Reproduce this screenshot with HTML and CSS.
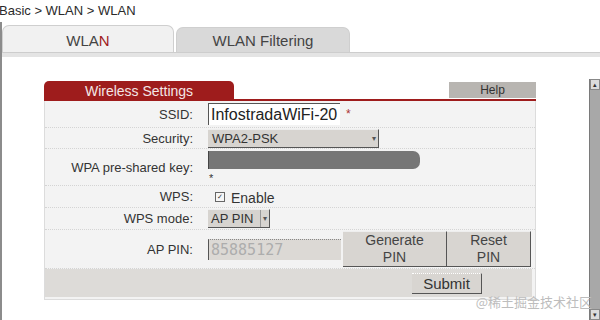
FILE: index.html
```html
<!DOCTYPE html>
<html lang="en">
<head>
  <meta charset="UTF-8">
  <title>WLAN</title>
  <link rel="stylesheet" href="styles.css">
</head>
<body>
  <div class="crumb">Basic &gt; WLAN &gt; WLAN</div>

  <div class="frame">
    <div class="tabs">
      <div class="tab active">WLA<span class="red">N</span></div>
      <div class="tab">WLAN Filtering</div>
    </div>
    <div class="tabline"></div>

    <div class="content">
      <div class="main">
        <div class="panel">
          <div class="panel-head">
            <div class="title">Wireless Settings</div>
            <div class="help">Help</div>
          </div>
          <div class="panel-body">
            <div class="row r-ssid">
              <label>SSID:</label>
              <div class="val">
                <span class="text-input">InfostradaWiFi-20</span>
                <span class="req">*</span>
              </div>
            </div>
            <div class="row r-sec">
              <label>Security:</label>
              <div class="val">
                <span class="select wide">WPA2-PSK<span class="arrow">&#9662;</span></span>
              </div>
            </div>
            <div class="row r-key">
              <label>WPA pre-shared key:</label>
              <div class="val col">
                <span class="masked"></span>
                <span class="star">*</span>
              </div>
            </div>
            <div class="row r-wps">
              <label>WPS:</label>
              <div class="val">
                <span class="check">&#10003;</span>
                <span class="enable">Enable</span>
              </div>
            </div>
            <div class="row r-mode">
              <label>WPS mode:</label>
              <div class="val">
                <span class="select narrow">AP PIN<span class="arrow">&#9662;</span></span>
              </div>
            </div>
            <div class="row r-pin">
              <label>AP PIN:</label>
              <div class="val stretch">
                <span class="pin-input">85885127</span>
                <button class="btn gen">Generate<br>PIN</button>
                <button class="btn reset">Reset<br>PIN</button>
              </div>
            </div>
            <div class="submit-row">
              <button class="submit">Submit</button>
            </div>
          </div>
        </div>
      </div>
      <div class="scrollbar">
        <span class="sb-btn">&#9652;</span>
        <span class="sb-btn">&#9662;</span>
      </div>
    </div>
  </div>

  <div class="watermark">@稀土掘金技术社区</div>
</body>
</html>
```

FILE: styles.css
```css
body {
  margin: 0;
  width: 600px;
  height: 320px;
  overflow: hidden;
  background: #fff;
  font-family: "Liberation Sans", Arial, sans-serif;
  color: #333;
  position: relative;
}
.crumb {
  height: 22px;
  padding-top: 3px;
  box-sizing: border-box;
  margin-left: -1px;
  font-size: 13px;
  line-height: 16px;
  color: #2a2a2a;
}
.frame {
  height: 298px;
  border-left: 2px solid #8c8c8c;
  border-bottom: 2px solid #8c8c8c;
}
.tabs {
  display: flex;
  align-items: flex-end;
  gap: 2px;
  height: 30px;
}
.tab {
  width: 174px;
  height: 25px;
  box-sizing: border-box;
  border: 1px solid #cfcfcf;
  border-bottom: none;
  border-radius: 7px 7px 0 0;
  background: #d9d9d9;
  font-size: 15px;
  line-height: 26px;
  text-align: center;
  color: #444;
}
.tab.active {
  width: 172px;
  height: 27px;
  line-height: 29px;
  background: #f1f1f1;
}
.red {
  color: #a01c1c;
}
.tabline {
  height: 4px;
  background: #e4e4e4;
  border-top: 1px solid #cdcdcd;
}
.content {
  display: flex;
  height: 263px;
}
.main {
  flex: 1;
  padding: 24px 0 0 42px;
}
.panel {
  width: 492px;
}
.panel-head {
  display: flex;
  justify-content: space-between;
  align-items: flex-end;
  height: 18px;
  border-bottom: 2px solid #9e1c1c;
}
.title {
  width: 190px;
  height: 18px;
  background: #9e1c1c;
  border-radius: 5px 5px 0 0;
  color: #f3e6e6;
  font-size: 14px;
  line-height: 20px;
  text-align: center;
}
.help {
  width: 87px;
  height: 16px;
  margin-bottom: 1px;
  background: #b8b5b1;
  color: #333;
  font-size: 12px;
  line-height: 17px;
  text-align: center;
}
.panel-body {
  background: #f3f3f3;
  border: 1px solid #dcdcdc;
  border-top: none;
  padding-bottom: 2px;
}
.row {
  display: flex;
  align-items: center;
  border-bottom: 1px dotted #d4d4d4;
  font-size: 13px;
}
.row label {
  width: 148px;
  text-align: right;
  color: #333;
}
.val {
  display: flex;
  align-items: center;
  gap: 6px;
  margin-left: 15px;
}
.val.col {
  flex-direction: column;
  align-items: flex-start;
  gap: 0;
}
.val.stretch {
  align-self: stretch;
  gap: 0;
}
.r-ssid { height: 26px; }
.r-sec { height: 20px; }
.r-key { height: 36px; }
.r-wps { height: 21px; }
.r-mode { height: 21px; }
.r-pin { height: 38px; }
.text-input {
  width: 132px;
  height: 22px;
  box-sizing: border-box;
  background: #fff;
  border-top: 1px solid #555;
  border-left: 1px solid #555;
  padding-left: 2px;
  font-size: 16px;
  line-height: 22px;
  color: #222;
  overflow: hidden;
  white-space: nowrap;
}
.req {
  color: #a33;
  font-size: 12px;
}
.select {
  display: flex;
  justify-content: space-between;
  align-items: center;
  height: 19px;
  box-sizing: border-box;
  background: #d7d4d0;
  border-right: 1px solid #555;
  border-bottom: 1px solid #555;
  border-top: 1px solid #eee;
  padding-left: 4px;
  font-size: 13px;
  color: #333;
}
.select.wide { width: 171px; }
.select.narrow { width: 62px; padding-left: 3px; }
.arrow {
  width: 8px;
  font-size: 8px;
  color: #555;
  text-align: center;
}
.select.narrow .arrow {
  border-left: 1px solid #999;
  height: 17px;
  line-height: 17px;
}
.masked {
  width: 211px;
  height: 18px;
  margin-top: 1px;
  background: #767676;
  border-radius: 0 7px 7px 0;
  border-left: 1px solid #444;
}
.star {
  font-size: 11px;
  line-height: 12px;
  padding-left: 1px;
  margin-top: 3px;
}
.check {
  width: 8px;
  height: 8px;
  margin-left: 7px;
  border: 1px solid #666;
  font-size: 7px;
  line-height: 8px;
  text-align: center;
  color: #333;
  background: #f6f6f6;
}
.enable {
  font-size: 14px;
  margin-top: 3px;
}
.pin-input {
  width: 133px;
  height: 21px;
  align-self: center;
  margin-top: 1px;
  box-sizing: border-box;
  background: #dcd9d5;
  border-top: 1px dotted #888;
  border-left: 1px solid #555;
  padding-left: 2px;
  font-family: "DejaVu Sans Mono", monospace;
  font-size: 15px;
  line-height: 20px;
  color: #adadad;
}
.btn {
  margin: 0;
  padding: 0;
  font-family: "Liberation Sans", Arial, sans-serif;
  font-size: 14px;
  line-height: 17px;
  color: #444;
  background: #d8d5d1;
  border: none;
  border-top: 1px solid #eee;
  border-right: 1px solid #555;
  border-bottom: 1px solid #555;
}
.btn.gen {
  width: 104px;
  margin-left: 2px;
}
.btn.reset {
  width: 84px;
}
.submit-row {
  display: flex;
  justify-content: flex-end;
  align-items: center;
  height: 28px;
  margin-right: 3px;
  padding-right: 50px;
  background: #dddbd8;
}
.submit {
  width: 70px;
  height: 21px;
  margin: 0;
  padding: 0;
  font-family: "Liberation Sans", Arial, sans-serif;
  font-size: 15px;
  color: #333;
  background: #d8d5d1;
  border: none;
  border-top: 1px dotted #fff;
  border-right: 1px solid #555;
  border-bottom: 1px solid #555;
}
.scrollbar {
  display: flex;
  flex-direction: column;
  justify-content: space-between;
  width: 10px;
  margin-top: 22px;
  background: #a8a8a8;
  border-left: 1px solid #7a7a7a;
}
.sb-btn {
  height: 9px;
  background: #dcdcdc;
  border: 1px solid #888;
  font-size: 7px;
  line-height: 9px;
  text-align: center;
  color: #333;
}
.watermark {
  position: absolute;
  right: 8px;
  bottom: 9px;
  font-family: "Noto Sans CJK SC", sans-serif;
  font-size: 13px;
  color: #bdbdbd;
}
```
